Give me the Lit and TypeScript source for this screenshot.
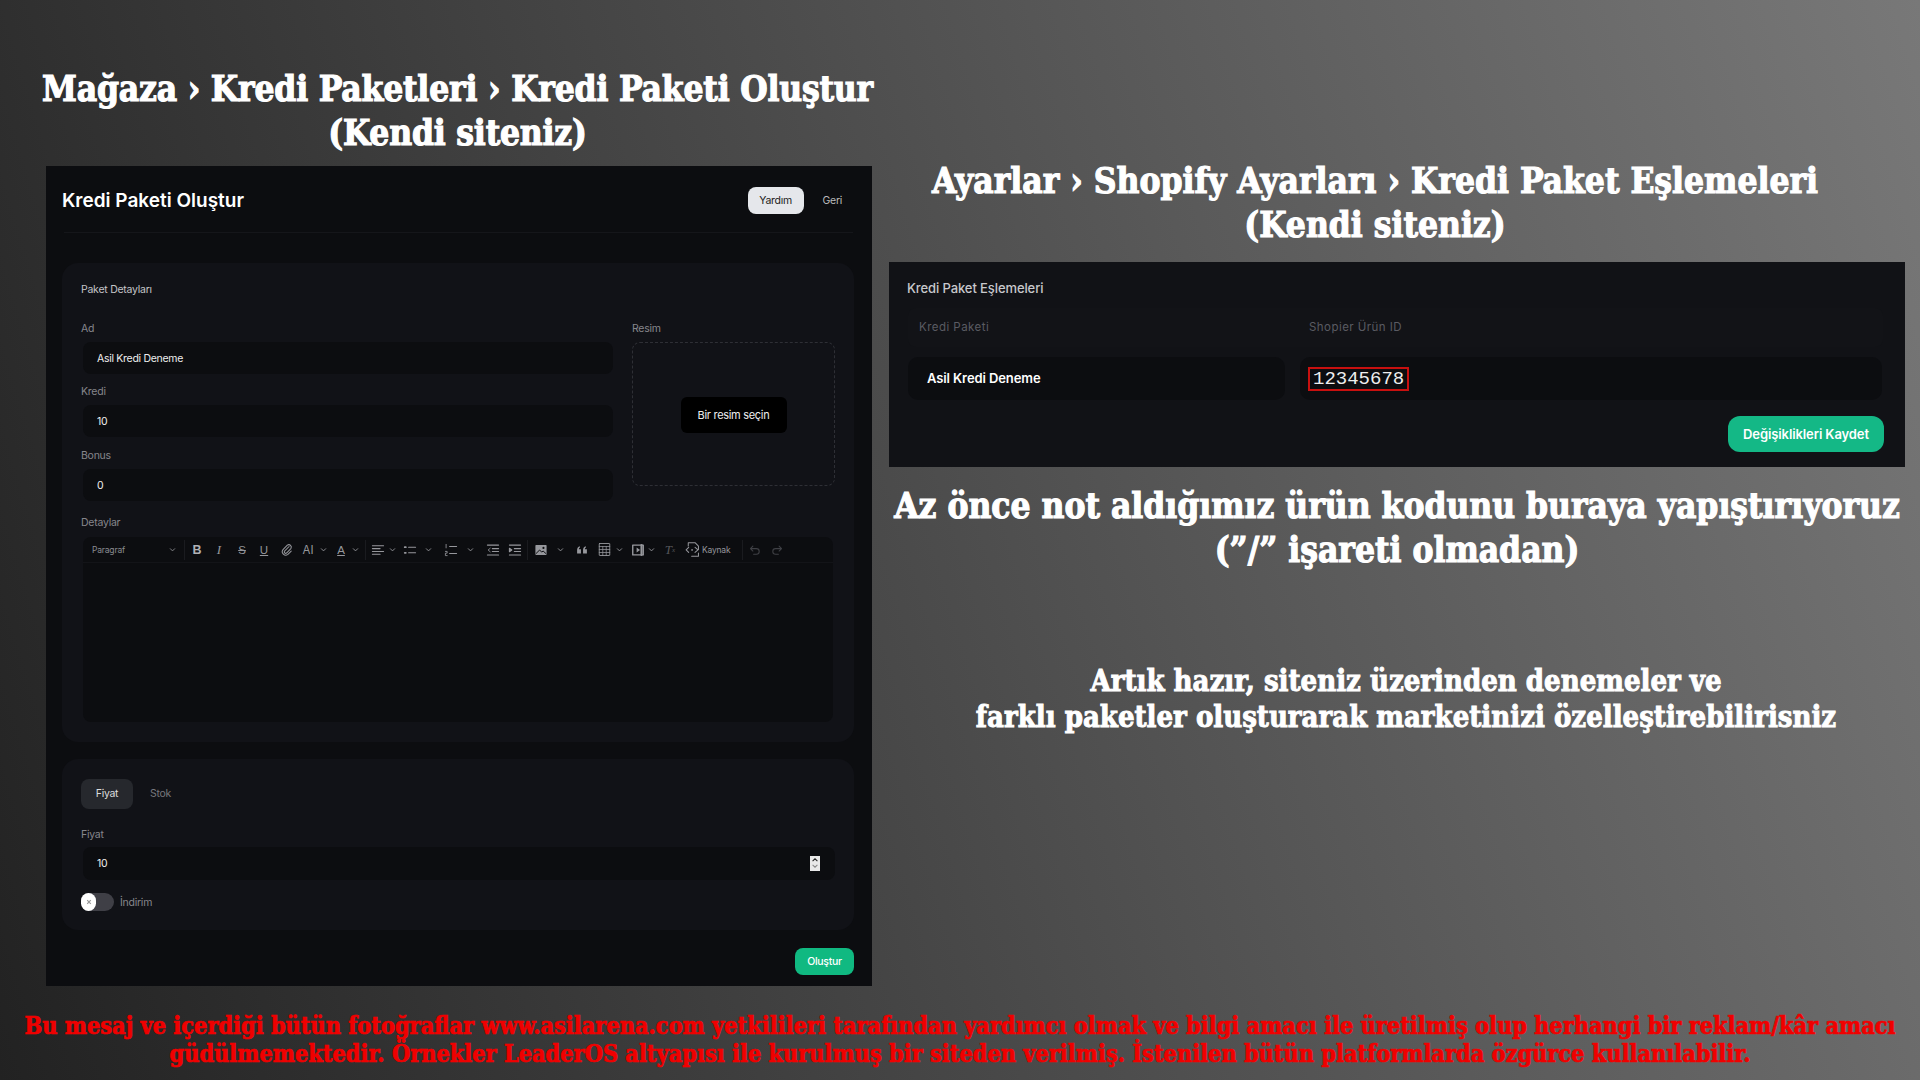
import { LitElement, html, css, svg } from "lit";
import { customElement } from "lit/decorators.js";

const P = (d: any, s = 14) => svg`<svg viewBox="0 0 20 20" width=${s} height=${s} fill="none" stroke="currentColor" stroke-width="1.5" stroke-linecap="round" stroke-linejoin="round">${d}</svg>`;
const icons: Record<string, any> = {
  link: P(svg`<path d="M13 5 6.500 11.500a2 2 0 0 0 2.800 2.800L15.500 8a3.600 3.600 0 0 0-5-5L4.300 9.300a5 5 0 0 0 7 7L16 11.500"/>`),
  align: P(svg`<path d="M2 4h16M2 8h11M2 12h16M2 16h11"/>`),
  list: P(svg`<path d="M8 6h10M8 14h10"/><path d="M2.500 6h1.500M2.500 14h1.500" stroke-width="2.600"/>`),
  num: P(svg`<path d="M8 5h10M8 15h10"/><path d="M3 2v5M2 12h2.500v2.500H2V18h2.500" stroke-width="1.200"/>`),
  out: P(svg`<path d="M2 3h16M9 8h9M9 12h9M2 17h16"/><path d="M6 7.500 3 10l3 2.500" stroke-width="1.200"/>`),
  ind: P(svg`<path d="M2 3h16M9 8h9M9 12h9M2 17h16"/><path fill="currentColor" d="M2 7.500 5.500 10 2 12.500z"/>`),
  image: P(svg`<rect x="2" y="3" width="16" height="14" rx="1" fill="currentColor" stroke="none"/><circle cx="13.500" cy="7" r="1.500" fill="#0c0d10" stroke="none"/><path d="m3 15 5-5 3 3 2-1.500 4 3.500" stroke="#0c0d10" stroke-width="1.400"/>`),
  quote: P(svg`<path fill="currentColor" stroke="none" d="M3 10c0-3 1.500-5 4-5.500v2C6 7 5.500 8 5.500 9H8.500v6H3zM11.500 10c0-3 1.500-5 4-5.500v2c-1 .5-1.500 1.500-1.500 2.500h3v6h-5.500z"/>`),
  table: P(svg`<rect x="3" y="2" width="14" height="16" rx=".5" stroke-width="1.200"/><path d="M3 6h14M3 10h14M3 14h14M7.700 6v12M12.300 6v12" stroke-width="1"/>`, 15),
  media: P(svg`<rect x="2.500" y="3" width="15" height="14" stroke-width="2"/><path fill="currentColor" stroke="none" d="m8 6.500 5 3.500-5 3.500z"/><path d="M15 3v14" stroke-width="3"/>`),
  source: P(svg`<path d="M5 6V2h8l4 4v4M17 14v4H9" stroke-width="1.200"/><path d="M5.500 7.500 2.500 10.500l3 3M13 7.500l3.500 3-3.500 3" stroke-width="1.200"/><path d="M9.500 10.500h.01" stroke-width="2"/>`, 17),
  undo: P(svg`<path d="M4 8h8a4 4 0 0 1 0 8H8M7 4.500 3.500 8 7 11.500"/>`),
  redo: P(svg`<path d="M16 8H8a4 4 0 0 0 0 8h4M13 4.500 16.500 8 13 11.500"/>`),
};

const chev = html`<svg viewBox="0 0 10 10" width="7" height="7" fill="none" stroke="currentColor" stroke-width="1.300"><path d="m1.500 3.500 3.500 3.500 3.500-3.500"/></svg>`;

type T = [string, number, number];
// kind, width, left margin
const tools: T[] = [
  ["sep", 1, 0], ["txt:b", 22, 1], ["txt:i", 22, 0], ["txt:s", 22, 1], ["txt:u", 22, 0], ["link", 22, 0.5],
  ["txt:ai", 22, -0.5], ["chev", 9, 0], ["txt:a", 22, 2], ["chev", 9, -1], ["sep", 1, 4.5],
  ["align", 22, 1], ["chev", 9, -1], ["list", 22, 2.5], ["chev", 10, 2.5], ["num", 22, 6], ["chev", 10, 4],
  ["out", 22, 6.5], ["ind", 22, 0], ["sep", 1, 1], ["image", 22, 1.5], ["chev", 10, 3.5], ["quote", 22, 6], ["table", 22, 0.4],
  ["chev", 10, -1.4], ["media", 22, 2.6], ["chev", 10, -2.6], ["txt:tx", 22, 3], ["source", 22, 0.6], ["txt:k", 30, -1.6], ["sep", 1, 9.6], ["undo", 22, 1.8], ["redo", 22, -0.1],
];

@customElement("app-root")
export class AppRoot extends LitElement {
  static styles = css`
    :host { display: block; width: 1920px; height: 1080px; overflow: hidden; }
    * { box-sizing: border-box; }
    .page {
      width: 1920px; height: 1080px; display: grid;
      grid-template-columns: 826px 1016px; column-gap: 17px; grid-template-rows: 1000px 80px;
      padding-left: 46px;
      background: linear-gradient(72.6deg, #222222 0%, #787878 100%);
      font-family: Inter, "Liberation Sans", sans-serif; color: #fff;
    }
    .h {
      font-family: "DejaVu Serif Condensed", "DejaVu Serif", serif; font-weight: 700; color: #fff;
      text-align: center; font-size: 35px; line-height: 44px; margin: 0; white-space: nowrap;
      -webkit-text-stroke: 1.1px #fff;
    }
    .left { padding-top: 67px; display: flex; flex-direction: column; }
    .left .h { letter-spacing: -0.18px; margin-left: -4px; margin-right: -1px; }
    .panel { background: #0c0d10; margin-top: 11px; height: 820px; padding: 21px 18px 0 16px; display: flex; flex-direction: column; }
    .top { display: flex; align-items: center; height: 27px; }
    .top h1 { font-size: 19px; font-weight: 600; margin: 0; flex: 1; letter-spacing: 0; }
    .yardim { width: 56px; height: 27px; margin-left: -1px; background: #e5e7eb; color: #222; border-radius: 8px; font-size: 10.500px; display: flex; align-items: center; justify-content: center; letter-spacing: -0.3px; }
    .geri { font-size: 10.500px; color: #bbb; margin: 0 12px 0 19px; letter-spacing: -0.3px; }
    .rule { height: 1px; background: #15161a; margin: 18px 1px 0 2px; }
    .card { background: #111217; border-radius: 16px; }
    .c1 { margin-top: 30px; height: 479px; padding: 19px 19px 0 19px; }
    .c2 { margin-top: 17px; height: 171px; padding: 20px 19px 0 19px; }
    .ct { font-size: 10.500px; color: #c4c4c8; line-height: 14px; letter-spacing: -0.25px; padding-top: 1px; height: 14px; }
    .lab { display: block; font-size: 10.500px; color: #86868c; line-height: 14px; height: 14px; letter-spacing: -0.25px; position: relative; top: 1px; }
    .grid { display: grid; grid-template-columns: 532px 203px; column-gap: 19px; margin-top: 25px; }
    .field { height: 32px; margin: 7px 0 0 2px; background: #0c0d10; border-radius: 8px; font-size: 10.500px; letter-spacing: -0.3px; padding-left: 14px; display: flex; align-items: center; color: #eee; }
    .f2 { margin-top: 10px; }
    .f3 { margin-top: 11px; }
    .drop { margin-top: 7px; height: 144px; border: 1px dashed #2e2f35; border-radius: 8px; display: flex; align-items: center; justify-content: center; }
    .pick { width: 106px; height: 36px; background: #000; border-radius: 6px; font-size: 11px; letter-spacing: -0.3px; display: flex; align-items: center; justify-content: center; margin-top: 2px; color: #eee; }
    .lab.dl { margin-top: 15px; top: 0; }
    .editor { margin: 7px 2px 0 2px; width: 750px; height: 185px; background: #0c0d10; border-radius: 8px; display: flex; flex-direction: column; }
    .bar { height: 26px; display: flex; align-items: center; border-bottom: 1px solid #131418; color: #96979c; flex: none; }
    .para { width: 101px; padding: 0 8px 0 9px; display: flex; align-items: center; justify-content: space-between; font-size: 8.500px; letter-spacing: -0.2px; color: #8b8c91; }
    .t { display: flex; align-items: center; justify-content: center; flex: none; font-size: 11.500px; height: 22px; }
    .sep { height: 20px; background: #1a1b1f; }
    .b { font-weight: 700; font-family: "Liberation Sans", sans-serif; font-size: 12.500px; color: #b0b1b5; }
    .i { font-style: italic; font-family: "Liberation Serif", serif; font-size: 13px; }
    .s { text-decoration: line-through; font-family: "Liberation Sans", sans-serif; }
    .u { text-decoration: underline; font-family: "Liberation Sans", sans-serif; }
    .tx { font-family: "Liberation Serif", serif; font-style: italic; font-size: 13px; color: #55565a; }
    .tx sub { font-size: 7px; }
    .k { font-size: 8.500px; letter-spacing: -0.2px; justify-content: flex-start; }
    .dim { color: #3f4045; }
    .tabs { display: flex; align-items: center; }
    .tab { width: 52px; height: 30px; padding-bottom: 2px; border-radius: 8px; background: #26282d; font-size: 10.500px; letter-spacing: -0.3px; display: flex; align-items: center; justify-content: center; color: #ddd; }
    .tab2 { font-size: 10.500px; letter-spacing: -0.3px; color: #77777c; margin: -2px 0 0 17px; }
    .l2 { margin-top: 18px; }
    .num { height: 33px; margin: 6px 0 0 2px; justify-content: space-between; padding-right: 15px; }
    .spin { width: 10px; height: 15px; background: #e8e8e8; display: flex; flex-direction: column; align-items: center; color: #222; }
    .spin svg { display: block; margin: 1px 0 -1px; }
    .tog { display: flex; align-items: center; margin-top: 13px; }
    .track { width: 33px; height: 18px; border-radius: 9px; background: #3f3f46; display: flex; align-items: center; }
    .knob { width: 15px; height: 18px; border-radius: 9px; background: #fff; color: #999; display: flex; align-items: center; justify-content: center; }
    .tl { margin-left: 6px; color: #86868c; font-size: 10.500px; letter-spacing: -0.25px; }
    .actions { display: flex; justify-content: flex-end; margin-top: 18px; }
    .ok { width: 59px; height: 27px; background: #10b981; border-radius: 8px; font-size: 10.500px; letter-spacing: -0.3px; font-weight: 500; display: flex; align-items: center; justify-content: center; }

    .right { padding-top: 159px; display: flex; flex-direction: column; }
    .rh { padding-right: 44px; }
    .rp { background: #111216; height: 205px; margin-top: 15px; padding: 19px 22px 0 18px; }
    .rt { font-size: 13px; font-weight: 500; color: #c8c8cc; line-height: 14px; letter-spacing: -0.1px; }
    .cols { display: grid; grid-template-columns: 377px 582px; column-gap: 15px; margin-left: 1px; }
    .head { height: 39px; margin-top: 13px; padding-bottom: 2px; border-radius: 8px; font-size: 11.500px; color: #5a5b62; letter-spacing: 0.45px; align-items: center; background: #121317; }
    .head div:first-child { padding-left: 11px; }
    .head div:last-child { padding-left: 9px; }
    .rowc { margin-top: 10px; height: 43px; }
    .cell { background: #0c0d10; border-radius: 10px; display: flex; align-items: center; }
    .cell b { font-size: 13px; font-weight: 600; padding-left: 19px; letter-spacing: -0.1px; position: relative; top: -1px; }
    .red { margin-left: 8px; width: 101px; height: 24px; border: 2px solid #c8100f; font-family: "Liberation Mono", monospace; font-size: 19px; padding-left: 3px; display: flex; align-items: center; color: #eee; white-space: nowrap; }
    .ra { display: flex; justify-content: flex-end; margin-top: 16px; margin-right: -1px; }
    .save { width: 156px; height: 36px; border-radius: 12px; background: #14b886; font-size: 13px; font-weight: 600; letter-spacing: -0.1px; display: flex; align-items: center; justify-content: center; }
    .h2 { margin-top: 17px; }
    .h3 { margin-top: 91px; font-size: 29px; line-height: 36px; padding-left: 18px; -webkit-text-stroke: 0.9px #fff; }
    .foot {
      grid-column: 1 / -1; margin: 12px 0 0 -46px; width: 1920px; text-align: center; color: #f00000;
      font-family: "DejaVu Serif Condensed", "DejaVu Serif", serif; font-weight: 700; font-size: 23.300px; line-height: 28px;
      white-space: nowrap; -webkit-text-stroke: 0.7px #f00000;
    }
  `;

  private tool(t: T) {
    const [k, w, m] = t;
    const st = `width:${w}px;margin-left:${m}px`;
    if (k === "sep") return html`<span class="sep" style=${st}></span>`;
    if (k === "chev") return html`<span class="t" style=${st}>${chev}</span>`;
    if (k.startsWith("txt:")) {
      const n = k.slice(4);
      const map: Record<string, any> = {
        b: html`<span class="t b" style=${st}>B</span>`,
        i: html`<span class="t i" style=${st}>I</span>`,
        s: html`<span class="t s" style=${st}>S</span>`,
        u: html`<span class="t u" style=${st}>U</span>`,
        ai: html`<span class="t" style=${st}>AI</span>`,
        a: html`<span class="t u" style=${st}>A</span>`,
        tx: html`<span class="t tx" style=${st}>T<sub>x</sub></span>`,
        k: html`<span class="t k" style=${st}>Kaynak</span>`,
      };
      return map[n];
    }
    const dim = k === "undo" || k === "redo";
    return html`<span class="t ${dim ? "dim" : ""}" style=${st}>${icons[k]}</span>`;
  }

  render() {
    return html`<div class="page">
      <section class="left">
        <h2 class="h">Mağaza › Kredi Paketleri › Kredi Paketi Oluştur<br />(Kendi siteniz)</h2>
        <div class="panel">
          <div class="top">
            <h1>Kredi Paketi Oluştur</h1>
            <span class="yardim">Yardım</span><span class="geri">Geri</span>
          </div>
          <div class="rule"></div>
          <div class="card c1">
            <div class="ct">Paket Detayları</div>
            <div class="grid">
              <div>
                <span class="lab">Ad</span>
                <div class="field">Asil Kredi Deneme</div>
                <span class="lab f2">Kredi</span>
                <div class="field">10</div>
                <span class="lab f3">Bonus</span>
                <div class="field">0</div>
              </div>
              <div>
                <span class="lab">Resim</span>
                <div class="drop"><span class="pick">Bir resim seçin</span></div>
              </div>
            </div>
            <span class="lab dl">Detaylar</span>
            <div class="editor">
              <div class="bar">
                <span class="para">Paragraf ${chev}</span>
                ${tools.map((t) => this.tool(t))}
              </div>
            </div>
          </div>
          <div class="card c2">
            <div class="tabs"><span class="tab">Fiyat</span><span class="tab2">Stok</span></div>
            <span class="lab l2">Fiyat</span>
            <div class="field num">10
              <span class="spin">
                <svg viewBox="0 0 10 7" width="8" height="6" fill="none" stroke="currentColor" stroke-width="1.300"><path d="m2 5 3-3 3 3"/></svg>
                <svg viewBox="0 0 10 7" width="8" height="6" fill="none" stroke="#888" stroke-width="1.300"><path d="m2 2 3 3 3-3"/></svg>
              </span>
            </div>
            <div class="tog">
              <span class="track"><span class="knob"><svg viewBox="0 0 10 10" width="6" height="6" stroke="currentColor" stroke-width="2"><path d="m2 2 6 6M8 2l-6 6"/></svg></span></span>
              <span class="tl">İndirim</span>
            </div>
          </div>
          <div class="actions"><span class="ok">Oluştur</span></div>
        </div>
      </section>
      <section class="right">
        <h2 class="h rh">Ayarlar › Shopify Ayarları › Kredi Paket Eşlemeleri<br />(Kendi siteniz)</h2>
        <div class="rp">
          <div class="rt">Kredi Paket Eşlemeleri</div>
          <div class="cols head"><div>Kredi Paketi</div><div>Shopier Ürün ID</div></div>
          <div class="cols rowc">
            <div class="cell"><b>Asil Kredi Deneme</b></div>
            <div class="cell"><span class="red">12345678</span></div>
          </div>
          <div class="ra"><span class="save">Değişiklikleri Kaydet</span></div>
        </div>
        <h2 class="h h2">Az önce not aldığımız ürün kodunu buraya yapıştırıyoruz<br />(”/” işareti olmadan)</h2>
        <h2 class="h h3">Artık hazır, siteniz üzerinden denemeler ve<br />farklı paketler oluşturarak marketinizi özelleştirebilirisniz</h2>
      </section>
      <footer class="foot">Bu mesaj ve içerdiği bütün fotoğraflar www.asilarena.com yetkilileri tarafından yardımcı olmak ve bilgi amacı ile üretilmiş olup herhangi bir reklam/kâr amacı<br />güdülmemektedir. Örnekler LeaderOS altyapısı ile kurulmuş bir siteden verilmiş. İstenilen bütün platformlarda özgürce kullanılabilir.</footer>
    </div>`;
  }
}
